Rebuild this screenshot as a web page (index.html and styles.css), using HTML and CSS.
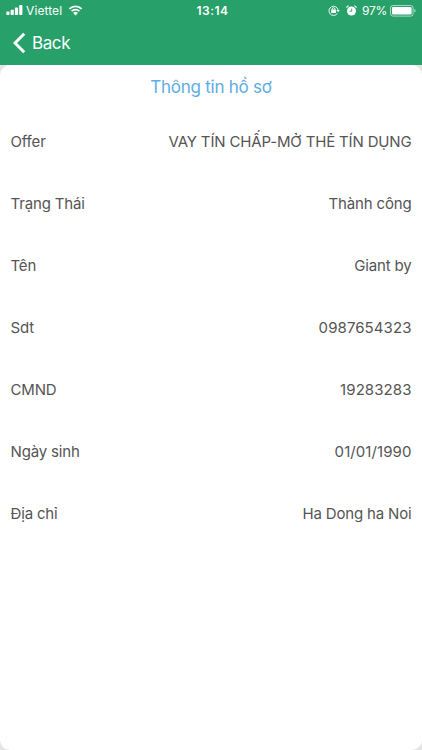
FILE: index.html
```html
<!DOCTYPE html>
<html lang="vi">

<head>
    <meta charset="UTF-8">
    <meta name="viewport" content="width=device-width, initial-scale=1">
    <title>Thông tin hồ sơ</title>
    <link rel="stylesheet" href="styles.css">
</head>

<body>
    <header>
        <div class="status">
            <div class="status-left">
                <svg class="signal" width="17" height="11" viewBox="0 0 17 11">
                    <rect x="0.3" y="6.6" width="3.2" height="3.4" rx="0.8" />
                    <rect x="4.6" y="4.8" width="3.2" height="5.2" rx="0.8" />
                    <rect x="8.9" y="2.6" width="3.2" height="7.4" rx="0.8" />
                    <rect x="13.2" y="0" width="3.2" height="10" rx="0.8" />
                </svg>
                <span class="carrier">Viettel</span>
                <svg class="wifi" width="15" height="11" viewBox="0 0 14 11">
                    <path d="M0.9 3.9a8.8 8.8 0 0 1 12.2 0M3.1 6.2a5.6 5.6 0 0 1 7.8 0" />
                    <path class="dot" d="M4.6 8a3.4 3.4 0 0 1 4.8 0L7 10.4z" />
                </svg>
            </div>
            <span class="time">13:14</span>
            <div class="status-right">
                <svg class="lock" width="12" height="11" viewBox="0 0 12 11">
                    <path class="ring" d="M9.4 8.4A4.6 4.6 0 1 1 10.1 5" />
                    <path d="M8.3 5h3.6l-1.8 2.3z" />
                    <rect x="3.2" y="4.6" width="4.7" height="3.5" rx="0.4" />
                    <path class="ring" d="M4.2 4.9V4a1.35 1.35 0 0 1 2.7 0v0.9" />
                </svg>
                <svg class="alarm" width="11" height="11" viewBox="0 0 11 11">
                    <circle cx="5.5" cy="6" r="4.5" />
                    <path d="M0.4 3.2A2 2 0 0 1 3.2 0.8zM10.6 3.2A2 2 0 0 0 7.8 0.8z" />
                    <path class="hands" d="M5.7 3.6V6.3H3.7" />
                </svg>
                <span class="percent">97%</span>
                <svg class="battery" width="26" height="12" viewBox="0 0 26 12">
                    <rect class="case" x="0.5" y="0.5" width="22.6" height="10.6" rx="2.4" />
                    <rect x="2" y="2" width="19.6" height="7.6" rx="1.1" />
                    <path class="cap" d="M24.3 4q1.4 0.5 1.4 1.8t-1.4 1.8z" />
                </svg>
            </div>
        </div>
        <a class="back" href="#">
            <svg width="13" height="22" viewBox="0 0 13 22">
                <path d="M11.2 1.8L2 11l9.2 9.2" />
            </svg>
            <span>Back</span>
        </a>
    </header>

    <main>
        <section class="card">
            <h1>Thông tin hồ sơ</h1>
            <dl>
                <div class="row">
                    <dt>Offer</dt>
                    <dd>VAY TÍN CHẤP-MỞ THẺ TÍN DỤNG</dd>
                </div>
                <div class="row">
                    <dt>Trạng Thái</dt>
                    <dd>Thành công</dd>
                </div>
                <div class="row">
                    <dt>Tên</dt>
                    <dd>Giant by</dd>
                </div>
                <div class="row">
                    <dt>Sdt</dt>
                    <dd class="number">0987654323</dd>
                </div>
                <div class="row">
                    <dt>CMND</dt>
                    <dd class="number">19283283</dd>
                </div>
                <div class="row">
                    <dt>Ngày sinh</dt>
                    <dd class="number">01/01/1990</dd>
                </div>
                <div class="row">
                    <dt>Địa chỉ</dt>
                    <dd>Ha Dong ha Noi</dd>
                </div>
            </dl>
        </section>
    </main>
</body>

</html>
```
FILE: styles.css
```css
* {
    margin: 0;
    box-sizing: border-box;
}

body {
    display: flex;
    flex-direction: column;
    height: 100vh;
    background-color: #e4e4e4;
    font-family: Inter, "Noto Sans", sans-serif;
    color: #555;
}

header {
    height: 65px;
    background-color: #27a069;
    color: white;
}

.status {
    display: grid;
    grid-template-columns: 1fr auto 1fr;
    align-items: center;
    height: 21px;
    padding: 0 6px;
    font-size: 12px;
}

.status-left,
.status-right {
    display: flex;
    align-items: center;
}

.status-right {
    justify-content: flex-end;
}

.status svg {
    fill: white;
}

.carrier {
    margin: 0 6px 0 3px;
    letter-spacing: 0.1px;
}

.wifi path {
    fill: none;
    stroke: white;
    stroke-width: 1.8;
}

.wifi .dot {
    fill: white;
    stroke: none;
}

.time {
    padding-left: 3px;
    font-weight: 600;
    letter-spacing: 0.5px;
}

.lock .ring {
    fill: none;
    stroke: white;
    stroke-width: 0.9;
}

.alarm {
    margin: 0 5px 0 6px;
}

.alarm .hands {
    fill: none;
    stroke: #27a069;
    stroke-width: 0.9;
}

.percent {
    margin-right: 3px;
    letter-spacing: -0.3px;
}

.battery .case {
    fill: none;
    stroke: white;
    stroke-opacity: 0.6;
}

.battery .cap {
    fill-opacity: 0.6;
}

.back {
    display: inline-flex;
    align-items: center;
    gap: 6px;
    height: 44px;
    padding-left: 13px;
    color: white;
    font-size: 17px;
    letter-spacing: -0.4px;
    text-decoration: none;
}

.back path {
    fill: none;
    stroke: white;
    stroke-width: 3;
}

main {
    flex: 1;
}

.card {
    height: 100%;
    padding: 0 10.5px;
    background-color: white;
    border-radius: 10px;
}

h1 {
    height: 45px;
    color: #5dade2;
    font-size: 17px;
    font-weight: 400;
    letter-spacing: -0.25px;
    line-height: 44px;
    text-align: center;
}

.row {
    display: flex;
    justify-content: space-between;
    align-items: center;
    height: 62px;
    font-size: 15px;
    letter-spacing: -0.16px;
}

.number {
    letter-spacing: 0.08px;
}
```
